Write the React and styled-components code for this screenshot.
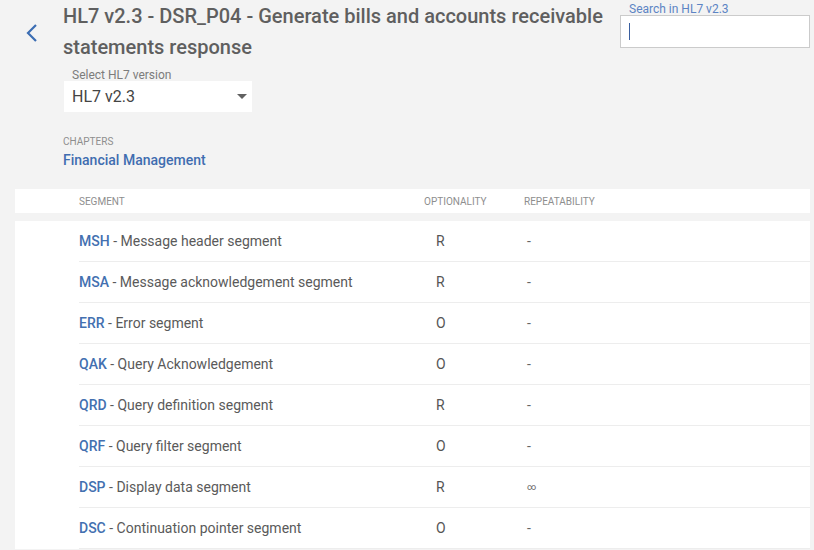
import React from 'react';
import styled, { createGlobalStyle } from 'styled-components';

const GlobalStyle = createGlobalStyle`
  html, body {
    margin: 0;
    padding: 0;
    background: #f3f3f3;
    font-family: Roboto, "Liberation Sans", Arial, sans-serif;
  }
`;

const Page = styled.div`
  width: 814px;
  height: 550px;
  overflow: hidden;
  padding-top: 1px;
  box-sizing: border-box;
  background: #f3f3f3;
`;

const Header = styled.div`
  display: flex;
  align-items: flex-start;
  padding: 0 4px 0 15px;
`;

const BackButton = styled.button`
  width: 48px;
  height: 32px;
  margin-top: 16px;
  padding: 0 0 0 10px;
  border: none;
  background: transparent;
  display: flex;
  align-items: center;
  cursor: pointer;
`;

const TitleBlock = styled.div`
  flex: 1;
  min-width: 0;
`;

const Title = styled.h1`
  margin: 0;
  width: 550px;
  font-size: 20px;
  line-height: 31px;
  font-weight: 500;
  color: #5f5f5f;
`;

const SearchBox = styled.div`
  width: 190px;
  padding-top: 2px;
`;

const SearchLabel = styled.div`
  font-size: 12px;
  line-height: 12px;
  color: #5c84c4;
  padding-left: 9px;
`;

const SearchInput = styled.div`
  height: 31px;
  background: #fff;
  border: 1px solid #cbcbcb;
  display: flex;
  align-items: center;
  padding-left: 8px;
`;

const Caret = styled.span`
  display: block;
  width: 1px;
  height: 17px;
  background: #3a5fa0;
`;

const SelectWrap = styled.div`
  margin-top: 6px;
  width: 188px;
  margin-left: 1px;
`;

const SelectLabel = styled.div`
  font-size: 12px;
  line-height: 12px;
  color: #7c7c7c;
  padding-left: 8px;
`;

const Select = styled.div`
  height: 31px;
  background: #fff;
  display: flex;
  align-items: center;
  justify-content: space-between;
  padding: 0 5px 0 8px;
  font-size: 16px;
  color: #444;
`;

const Triangle = styled.span`
  width: 0;
  height: 0;
  border-left: 5px solid transparent;
  border-right: 5px solid transparent;
  border-top: 5px solid #616161;
`;

const ChaptersLabel = styled.div`
  margin-top: 24px;
  font-size: 10px;
  line-height: 12px;
  color: #8e8e8e;
  text-transform: uppercase;
`;

const ChapterLink = styled.a`
  display: block;
  margin-top: 4px;
  font-size: 14px;
  line-height: 16px;
  font-weight: 500;
  color: #3f6db0;
  text-decoration: none;
`;

const Card = styled.div`
  margin: 0 4px 0 15px;
  background: #fff;
`;

const HeadCard = styled(Card)`
  margin-top: 21px;
  height: 24px;
  display: grid;
  grid-template-columns: 64px 345px 100px 1fr;
  align-items: center;
`;

const HeadCell = styled.div`
  font-size: 10px;
  color: #8e8e8e;
  text-transform: uppercase;
  grid-column: ${p => p.col};
`;

const BodyCard = styled(Card)`
  margin-top: 8px;
  padding-left: 64px;
`;

const Row = styled.div`
  height: 40px;
  display: grid;
  grid-template-columns: 345px 100px 1fr;
  align-items: center;
  border-bottom: 1px solid #ededed;
  font-size: 14px;
  color: #5a5a5a;
`;

const Code = styled.span`
  font-weight: 500;
  color: #4370b0;
`;

const Opt = styled.div`
  padding-left: 12px;
  color: #555;
`;

const Rep = styled.div`
  padding-left: 3px;
  color: #666;
  font-size: ${p => (p.inf ? '9px' : '14px')};
`;

const segments = [
  ['MSH', 'Message header segment', 'R', '-'],
  ['MSA', 'Message acknowledgement segment', 'R', '-'],
  ['ERR', 'Error segment', 'O', '-'],
  ['QAK', 'Query Acknowledgement', 'O', '-'],
  ['QRD', 'Query definition segment', 'R', '-'],
  ['QRF', 'Query filter segment', 'O', '-'],
  ['DSP', 'Display data segment', 'R', '∞'],
  ['DSC', 'Continuation pointer segment', 'O', '-'],
];

export default function App() {
  return (
    <Page>
      <GlobalStyle />
      <Header>
        <BackButton aria-label="Back">
          <svg width="14" height="20" viewBox="0 0 14 20">
            <path d="M11 2 L3 10 L11 18" fill="none" stroke="#3b6db3" strokeWidth="2.2" />
          </svg>
        </BackButton>
        <TitleBlock>
          <Title>HL7 v2.3 - DSR_P04 - Generate bills and accounts receivable statements response</Title>
          <SelectWrap>
            <SelectLabel>Select HL7 version</SelectLabel>
            <Select>
              HL7 v2.3
              <Triangle />
            </Select>
          </SelectWrap>
          <ChaptersLabel>Chapters</ChaptersLabel>
          <ChapterLink href="#">Financial Management</ChapterLink>
        </TitleBlock>
        <SearchBox>
          <SearchLabel>Search in HL7 v2.3</SearchLabel>
          <SearchInput>
            <Caret />
          </SearchInput>
        </SearchBox>
      </Header>
      <HeadCard>
        <HeadCell col={2}>Segment</HeadCell>
        <HeadCell col={3}>Optionality</HeadCell>
        <HeadCell col={4}>Repeatability</HeadCell>
      </HeadCard>
      <BodyCard>
        {segments.map(([code, name, opt, rep]) => (
          <Row key={code}>
            <div>
              <Code>{code}</Code> - {name}
            </div>
            <Opt>{opt}</Opt>
            <Rep inf={rep === '∞'}>{rep}</Rep>
          </Row>
        ))}
      </BodyCard>
    </Page>
  );
}
